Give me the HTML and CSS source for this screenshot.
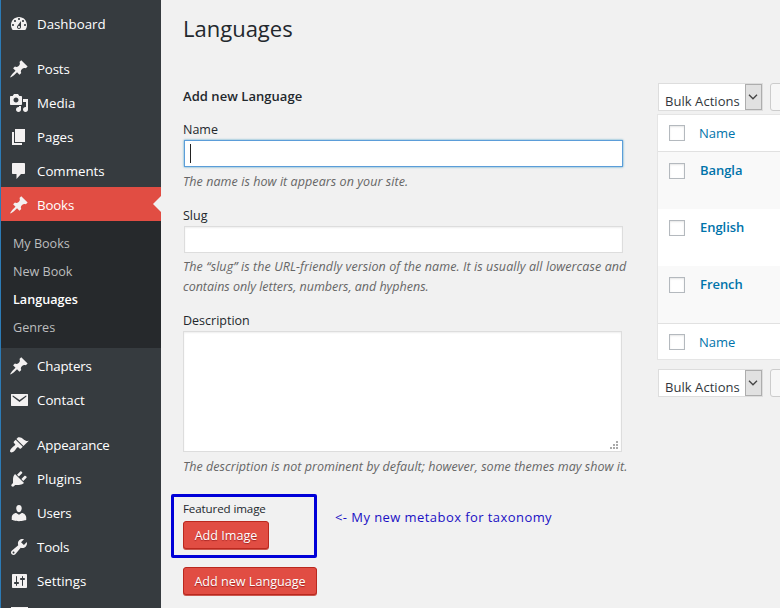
FILE: index.html
```html
<!DOCTYPE html>
<html lang="en">
<head>
<meta charset="utf-8">
<title>Languages</title>
<link rel="stylesheet" href="styles.css">
</head>
<body>
<div class="admin">
  <nav class="sidebar">
    <a class="item"><svg viewBox="0 0 20 20"><path d="M3.76 16h12.48c1.1-1.37 1.76-3.11 1.76-5 0-4.42-3.58-8-8-8s-8 3.58-8 8c0 1.89.66 3.63 1.76 5zM10 4c.55 0 1 .45 1 1s-.45 1-1 1-1-.45-1-1 .45-1 1-1zM6 6c.55 0 1 .45 1 1s-.45 1-1 1-1-.45-1-1 .45-1 1-1zm8 0c.55 0 1 .45 1 1s-.45 1-1 1-1-.45-1-1 .45-1 1-1zm-5.37 5.55L12 7v6c0 1.1-.9 2-2 2s-2-.9-2-2c0-.57.24-1.08.63-1.45zM4 10c.55 0 1 .45 1 1s-.45 1-1 1-1-.45-1-1 .45-1 1-1zm12 0c.55 0 1 .45 1 1s-.45 1-1 1-1-.45-1-1 .45-1 1-1zm-5 3c0-.55-.45-1-1-1s-1 .45-1 1 .45 1 1 1 1-.45 1-1z"/></svg><span>Dashboard</span></a>
    <a class="item gap"><svg viewBox="0 0 20 20"><path id="pin" d="M10.44 3.02l1.82-1.82 6.36 6.35-1.83 1.82c-1.05-.68-2.48-.57-3.41.36l-.75.75c-.92.93-1.04 2.35-.35 3.41l-1.83 1.82-2.41-2.41-2.8 2.79c-.42.42-3.38 2.71-3.8 2.29s1.86-3.39 2.28-3.81l2.79-2.79L4.1 9.36l1.83-1.82c1.05.69 2.48.57 3.4-.36l.75-.75c.93-.92 1.05-2.35.36-3.41z"/></svg><span class="tight">Posts</span></a>
    <a class="item"><svg viewBox="0 0 20 20"><path d="M13 11V4c0-.55-.45-1-1-1h-1.67L9 1H5L3.67 3H2c-.55 0-1 .45-1 1v7c0 .55.45 1 1 1h10c.55 0 1-.45 1-1zM7 4.5c1.38 0 2.5 1.12 2.5 2.5S8.38 9.5 7 9.5 4.5 8.38 4.5 7 5.62 4.5 7 4.5zM14 6h5v10.5c0 1.38-1.12 2.5-2.5 2.5S14 17.88 14 16.5s1.12-2.5 2.5-2.5c.17 0 .34.02.5.05V9h-3V6zm-4 8.05V13h2v3.5c0 1.38-1.12 2.5-2.5 2.5S7 17.88 7 16.5 8.12 14 9.5 14c.17 0 .34.02.5.05z"/></svg><span>Media</span></a>
    <a class="item"><svg viewBox="0 0 20 20"><path d="M6 15V2h10v13H6zm-1 1h8v2H3V5h2v11z"/></svg><span>Pages</span></a>
    <a class="item"><svg viewBox="0 0 20 20"><path d="M4 2h11c.6 0 1 .4 1 1v9c0 .6-.4 1-1 1h-3l-4.500 5v-5H4c-.6 0-1-.4-1-1V3c0-.6.4-1 1-1z"/></svg><span>Comments</span></a>
    <a class="item current"><svg viewBox="0 0 20 20"><use href="#pin"/></svg><span class="tight">Books</span></a>
    <div class="submenu">
      <a>My Books</a>
      <a>New Book</a>
      <a class="on">Languages</a>
      <a>Genres</a>
    </div>
    <a class="item"><svg viewBox="0 0 20 20"><use href="#pin"/></svg><span class="tight">Chapters</span></a>
    <a class="item"><svg viewBox="0 0 20 20"><path d="M2.500 4h16c.3 0 .5.2.5.5v11c0 .3-.2.500-.5.500h-16c-.3 0-.5-.2-.5-.5v-11c0-.3.2-.5.500-.5zM4 5.500c-.6.2-.7.800-.2 1.200l6.700 5.300 6.700-5.300c.5-.4.400-1-.2-1.200l-6.500 4.500z"/></svg><span>Contact</span></a>
    <a class="item gap"><svg viewBox="0 0 20 20"><path d="M14.480 11.060L7.410 3.990l1.500-1.500c.5-.56 2.300-.47 3.510.32 1.210.8 1.430 1.280 2.910 2.100 1.180.64 2.450 1.260 4.450.85zm-.71.71L6.700 4.700 4.930 6.470c-.39.39-.39 1.020 0 1.410l1.060 1.060c.39.39.39 1.030 0 1.420-.6.6-1.430 1.110-2.210 1.690-.35.26-.7.53-1.010.84C1.430 14.230.4 16.080 1.400 17.070c.99 1 2.840-.03 4.180-1.360.31-.31.58-.66.85-1.020.57-.78 1.080-1.610 1.690-2.210.39-.39 1.020-.39 1.410 0l1.060 1.060c.39.39 1.020.39 1.410 0z"/></svg><span class="tight">Appearance</span></a>
    <a class="item"><svg viewBox="0 0 20 20"><path d="M13.110 4.360L9.870 7.600 8 5.730l3.240-3.240c.35-.34 1.050-.2 1.560.32.52.51.66 1.210.31 1.550zm-8 1.770l.91-1.120 9.010 9.010-1.190.84c-.71.71-2.630 1.160-3.820 1.160H6.140L4.900 17.260c-.59.59-1.540.59-2.120 0-.59-.58-.59-1.530 0-2.120l1.240-1.240v-3.880c0-1.130.4-3.190 1.090-3.890zm7.260 3.970l3.240-3.240c.34-.35 1.040-.21 1.550.31.52.51.66 1.210.31 1.550l-3.240 3.250z"/></svg><span>Plugins</span></a>
    <a class="item"><svg viewBox="0 0 20 20"><path d="M10 9.250c-2.270 0-2.730-3.440-2.730-3.440C7 4.020 7.820 2 9.970 2c2.160 0 2.980 2.020 2.710 3.810 0 0-.41 3.440-2.680 3.440zm0 2.570L12.720 10c2.390 0 4.520 2.330 4.520 4.530v2.490s-3.650 1.130-7.240 1.130c-3.650 0-7.240-1.130-7.240-1.130v-2.490c0-2.250 1.940-4.480 4.470-4.480z"/></svg><span class="tight">Users</span></a>
    <a class="item"><svg viewBox="0 0 20 20"><path d="M16.680 9.770c-1.340 1.340-3.300 1.670-4.950.99l-5.410 6.520c-.99.99-2.590.99-3.580 0s-.99-2.590 0-3.570l6.520-5.420c-.68-1.650-.35-3.610.99-4.950 1.280-1.280 3.120-1.620 4.720-1.060l-2.890 2.890 2.820 2.820 2.860-2.870c.53 1.580.18 3.390-1.080 4.650zM3.810 16.210c.4.39 1.040.39 1.430 0 .4-.4.4-1.040 0-1.430-.39-.4-1.030-.4-1.430 0-.39.39-.39 1.030 0 1.430z"/></svg><span class="tight">Tools</span></a>
    <a class="item"><svg viewBox="0 0 20 20"><path d="M18 16V4c0-.55-.45-1-1-1H4c-.55 0-1 .45-1 1v12c0 .55.45 1 1 1h13c.55 0 1-.45 1-1zM8 11h1c.55 0 1 .45 1 1s-.45 1-1 1H8v1.500c0 .28-.22.5-.5.5s-.5-.22-.5-.5V13H6c-.55 0-1-.45-1-1s.45-1 1-1h1V5.500c0-.28.22-.5.5-.5s.5.22.5.5V11zm5-2h-1c-.55 0-1-.45-1-1s.45-1 1-1h1V5.500c0-.28.22-.5.5-.5s.5.22.5.5V7h1c.55 0 1 .45 1 1s-.45 1-1 1h-1v5.500c0 .28-.22.5-.5.5s-.5-.22-.5-.5V9z"/></svg><span>Settings</span></a>
    <a class="item"><svg viewBox="0 0 20 20"><path d="M2 2h17v14H2z"/></svg></a>
  </nav>

  <main class="content">
    <h1>Languages</h1>
    <div class="columns">
      <section class="form">
        <h2>Add new Language</h2>
        <label class="label">Name</label>
        <div class="input focus"><i class="caret"></i></div>
        <p class="help h1l"><span class="t-p1">The name is how it appears on your site.</span></p>
        <label class="label">Slug</label>
        <div class="input"></div>
        <p class="help h2l"><span class="t-p2">The “slug” is the URL-friendly version of the name. It is usually all lowercase and</span><br><span class="t-p3">contains only letters, numbers, and hyphens.</span></p>
        <label class="label">Description</label>
        <div class="textarea"><svg class="grip" viewBox="0 0 8 8"><path d="M6 0h2v2H6zM3 3h2v2H3zM6 3h2v2H6zM0 6h2v2H0zM3 6h2v2H3zM6 6h2v2H6z"/></svg></div>
        <p class="help h3l"><span class="t-p4">The description is not prominent by default; however, some themes may show it.</span></p>
        <div class="metarow">
          <div class="metabox">
            <label class="feat">Featured image</label>
            <button class="btn b1">Add Image</button>
          </div>
          <div class="note"><span>&lt;- My new metabox for taxonomy</span></div>
        </div>
        <button class="btn b2">Add new Language</button>
      </section>

      <section class="list">
        <div class="bulk"><div class="select"><span>Bulk Actions</span><b><svg viewBox="0 0 10 6"><path d="M1 .8l4 4 4-4"/></svg></b></div><div class="apply"></div></div>
        <div class="table">
          <div class="row head"><i class="check"></i><span>Name</span></div>
          <div class="row alt"><i class="check"></i><strong>Bangla</strong></div>
          <div class="row"><i class="check"></i><strong>English</strong></div>
          <div class="row alt"><i class="check"></i><strong>French</strong></div>
          <div class="row foot"><i class="check"></i><span>Name</span></div>
        </div>
        <div class="bulk bottom"><div class="select"><span>Bulk Actions</span><b><svg viewBox="0 0 10 6"><path d="M1 .8l4 4 4-4"/></svg></b></div><div class="apply"></div></div>
      </section>
    </div>
  </main>
</div>
</body>
</html>
```
FILE: styles.css
```css
* { box-sizing: border-box; }
body {
  margin: 0;
  height: 608px;
  overflow: hidden;
  background: #f1f1f1;
  color: #23282d;
  font: 13px/20px "Open Sans", "Noto Sans", sans-serif;
}
h1, h2, p { margin: 0; font-weight: 400; }
svg { display: block; }
span, strong, a, label { white-space: nowrap; }
.admin { display: flex; width: 780px; height: 608px; overflow: hidden; }

.sidebar {
  flex: none;
  width: 161px;
  height: 608px;
  overflow: hidden;
  padding-top: 6px;
  background: #363b3f;
  border-left: 1px solid #2c7bb6;
}
.item {
  display: flex;
  align-items: center;
  height: 34px;
  padding: 2px 0 0 8px;
  gap: 8px;
  color: #fff;
  font-size: 13.3px;
}
.item .tight { letter-spacing: -0.17px; }
.item svg { width: 20px; height: 20px; fill: #f3f1f1; flex: none; }
.item.gap { margin-top: 11px; }
.item.current { background: #e14d43; position: relative; }
.current::after {
  content: "";
  position: absolute;
  right: 0;
  top: 9px;
  border: 8px solid transparent;
  border-left: 0;
  border-right-color: #f1f1f1;
}
.submenu { background: #26292c; padding: 8px 0 7px 12px; }
.submenu a {
  display: block;
  height: 28px;
  line-height: 29px;
  font-size: 12.6px;
  color: #bcbdbe;
}
.submenu .on { color: #fff; font-weight: 600; }

.content { flex: 1; min-width: 0; padding-left: 22px; }
h1 { height: 83px; padding-top: 13px; font-size: 22px; line-height: 30px; }
.columns { display: flex; }
.form { flex: none; width: 444px; }
h2 { height: 37px; padding-top: 3px; font-size: 13px; font-weight: 600; line-height: 20px; letter-spacing: .05px; }
.label { display: block; height: 19px; line-height: 19px; font-size: 12.5px; }
.input {
  width: 439px;
  height: 27px;
  margin: 1px;
  border: 1px solid #ddd;
  background: #fff;
  box-shadow: inset 0 1px 2px rgba(0,0,0,.07);
}
.focus { border-color: #5b9dd9; box-shadow: 0 0 2px rgba(30,140,190,.8); padding: 3px 0 0 5px; }
.caret { display: block; width: 1px; height: 19px; background: #222; }
.help { font-style: italic; color: #666; font-size: 12.5px; line-height: 20px; }
.t-p1 { letter-spacing: .07px; }
.t-p2 { letter-spacing: .084px; }
.t-p3 { letter-spacing: -.02px; }
.t-p4 { letter-spacing: .035px; }
.h1l { padding-top: 4px; height: 38px; }
.h2l { padding-top: 3px; height: 57px; }
.h3l { padding-top: 5px; height: 42px; }
.textarea {
  width: 439px;
  height: 121px;
  margin-top: 1px;
  display: flex;
  align-items: flex-end;
  justify-content: flex-end;
  padding: 0 3px 2px 0;
  background: #fff;
  border: 1px solid #ddd;
  box-shadow: inset 0 1px 2px rgba(0,0,0,.07);
}
.grip { width: 8px; height: 8px; fill: #aaa; }
.metarow { display: flex; margin-left: -12px; }
.metabox {
  flex: none;
  width: 146px;
  height: 64px;
  border: 3px solid #0000d8;
  border-radius: 2px;
  padding: 3px 0 0 9px;
}
.feat { display: block; height: 21px; font-size: 11.6px; line-height: 18px; letter-spacing: -.12px; }
.btn {
  display: flex;
  align-items: center;
  justify-content: center;
  height: 28px;
  padding: 1px 0 0;
  border: 1px solid #ba281e;
  border-radius: 3px;
  background: #e14d43;
  color: #fff;
  font: 12.6px/20px "Open Sans", "Noto Sans", sans-serif;
  text-shadow: 0 1px 1px #a02222;
  box-shadow: 0 1px 0 #c9584f;
}
.b1 { width: 86px; }
.b2 { width: 134px; margin-top: 9px; }
.note { padding: 13px 0 0 18px; color: #1a10c4; font-size: 13px; letter-spacing: .43px; }

.list { flex: none; margin-left: 31px; width: 130px; font-size: 13px; }
.bulk { display: flex; gap: 7px; height: 31px; }
.select {
  display: flex;
  flex: none;
  width: 105px;
  height: 28px;
  background: #fff;
  border: 1px solid #ddd;
  color: #32373c;
}
.select span { flex: 1; padding: 7px 0 0 6px; line-height: 20px; letter-spacing: .05px; }
.select b { width: 17px; flex: none; background: #e1e1e1; border: 1px solid #adadad; padding: 9px 2px; }
.select svg { width: 10px; height: 6px; fill: none; stroke: #444; stroke-width: 1.3; }
.apply { width: 60px; height: 28px; flex: none; background: #f7f7f7; border: 1px solid #ccc; border-radius: 3px; }
.table { width: 200px; margin-left: -1px; border: 1px solid #e5e5e5; background: #fff; }
.row { display: flex; height: 57px; padding: 11px 0 0 11px; color: #0073aa; gap: 16px; }
.row span { margin-left: -2px; line-height: 16px; }
.row strong { margin-left: -1px; line-height: 15px; font-weight: 600; letter-spacing: -.05px; }
.row.alt { background: #f9f9f9; }
.row.head { height: 37px; padding-top: 10px; border-bottom: 1px solid #e1e1e1; }
.row.foot { height: 36px; padding-top: 10px; border-top: 1px solid #e1e1e1; }
.check { width: 16px; height: 16px; background: #fff; border: 1px solid #b4b9be; flex: none; box-shadow: inset 0 1px 2px rgba(0,0,0,.1); }
.bottom { margin-top: 9px; }
```
